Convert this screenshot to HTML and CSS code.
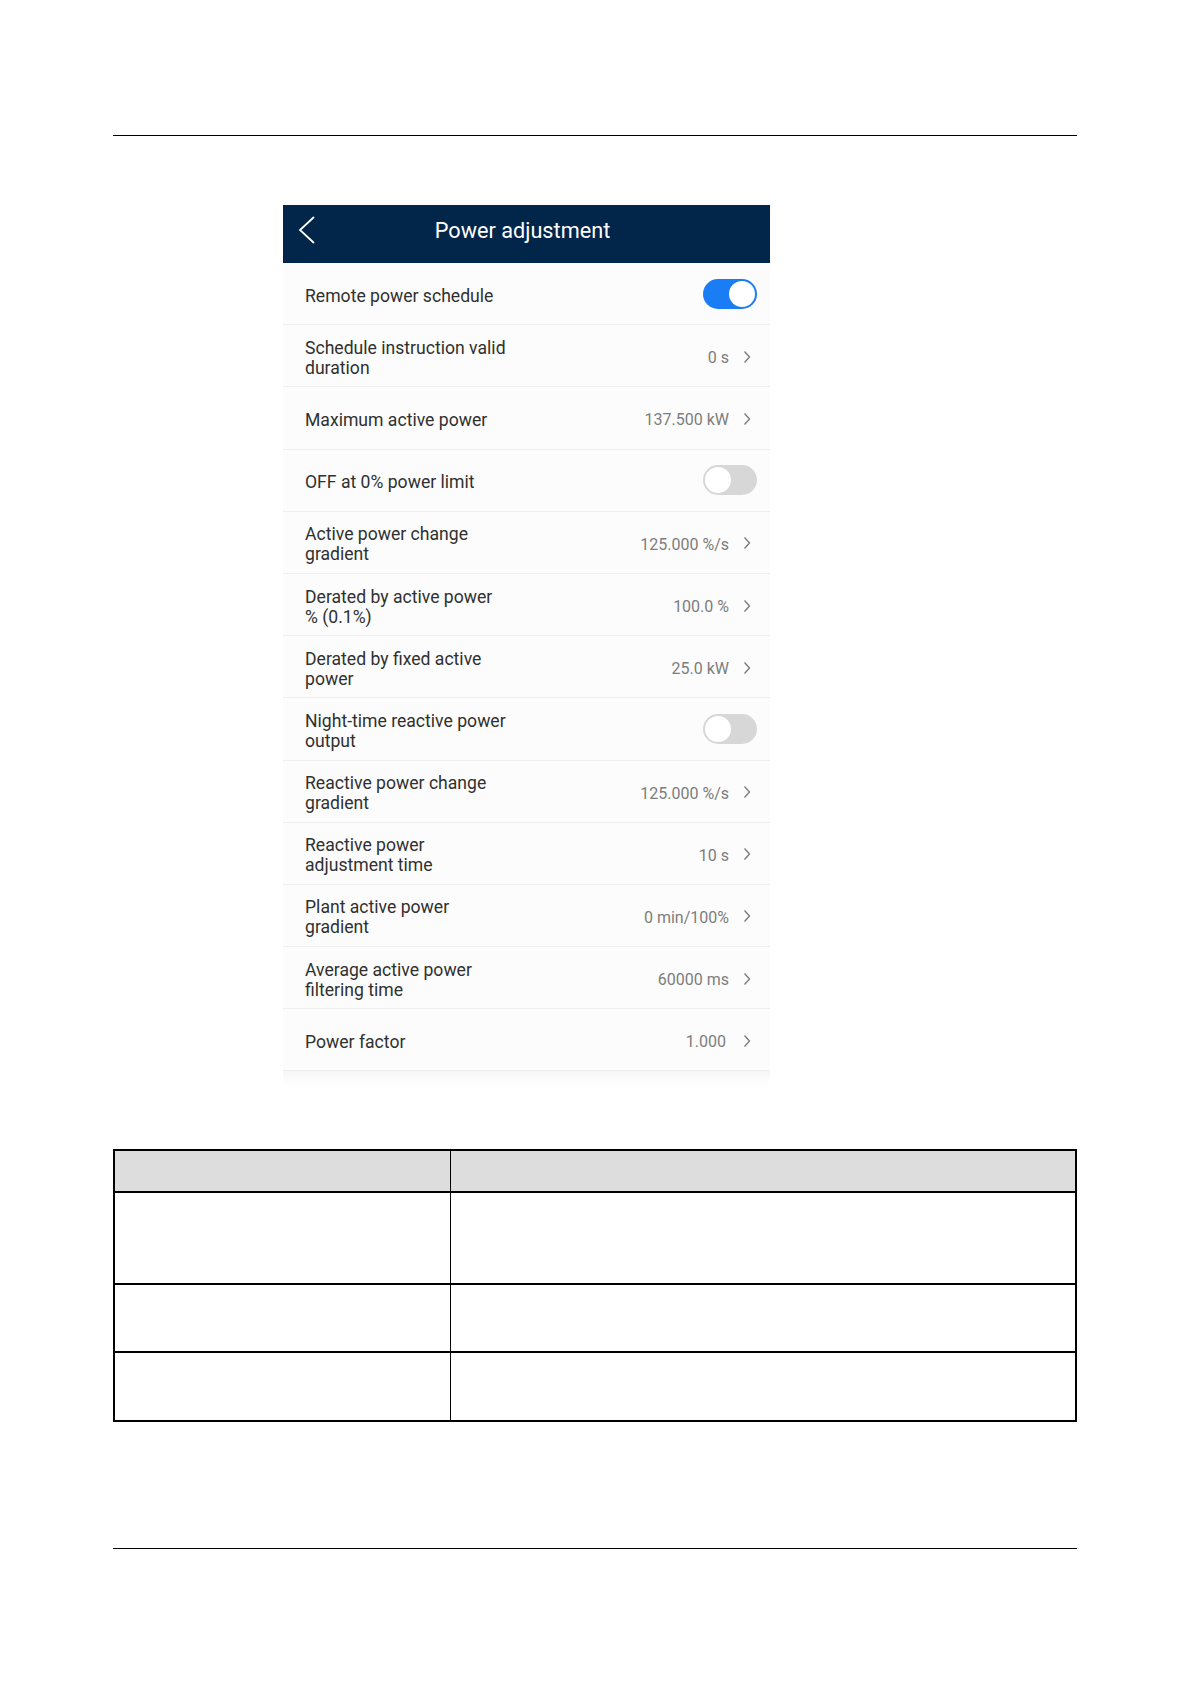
FILE: index.html
```html
<!DOCTYPE html>
<html>
<head>
    <title>Power adjustment</title>
    <link rel="stylesheet" href="styles.css">
</head>
<body>
    <div class="page">
        <div class="rule"></div>

        <div class="phone">
            <div class="appbar">
                <svg class="back" width="18" height="30" viewBox="0 0 18 30">
                    <polyline points="16,2 2,15 16,28" fill="none" stroke="#ffffff" stroke-width="1.8"/>
                </svg>
                <span class="title">Power adjustment</span>
            </div>

            <div class="list">
                <div class="row">
                    <div class="label">Remote power schedule</div>
                    <div class="switch on"><span class="knob"></span></div>
                </div>
                <div class="row">
                    <div class="label">Schedule instruction valid<br>duration</div>
                    <div class="value">0 s</div>
                    <svg class="chev" width="8" height="14" viewBox="0 0 8 14"><polyline points="1.5,1.5 6.5,7 1.5,12.5"/></svg>
                </div>
                <div class="row">
                    <div class="label">Maximum active power</div>
                    <div class="value">137.500 kW</div>
                    <svg class="chev" width="8" height="14" viewBox="0 0 8 14"><polyline points="1.5,1.5 6.5,7 1.5,12.5"/></svg>
                </div>
                <div class="row">
                    <div class="label">OFF at 0% power limit</div>
                    <div class="switch"><span class="knob"></span></div>
                </div>
                <div class="row">
                    <div class="label">Active power change<br>gradient</div>
                    <div class="value">125.000 %/s</div>
                    <svg class="chev" width="8" height="14" viewBox="0 0 8 14"><polyline points="1.5,1.5 6.5,7 1.5,12.5"/></svg>
                </div>
                <div class="row">
                    <div class="label">Derated by active power<br>% (0.1%)</div>
                    <div class="value">100.0 %</div>
                    <svg class="chev" width="8" height="14" viewBox="0 0 8 14"><polyline points="1.5,1.5 6.5,7 1.5,12.5"/></svg>
                </div>
                <div class="row">
                    <div class="label">Derated by fixed active<br>power</div>
                    <div class="value">25.0 kW</div>
                    <svg class="chev" width="8" height="14" viewBox="0 0 8 14"><polyline points="1.5,1.5 6.5,7 1.5,12.5"/></svg>
                </div>
                <div class="row">
                    <div class="label">Night-time reactive power<br>output</div>
                    <div class="switch"><span class="knob"></span></div>
                </div>
                <div class="row">
                    <div class="label">Reactive power change<br>gradient</div>
                    <div class="value">125.000 %/s</div>
                    <svg class="chev" width="8" height="14" viewBox="0 0 8 14"><polyline points="1.5,1.5 6.5,7 1.5,12.5"/></svg>
                </div>
                <div class="row">
                    <div class="label">Reactive power<br>adjustment time</div>
                    <div class="value">10 s</div>
                    <svg class="chev" width="8" height="14" viewBox="0 0 8 14"><polyline points="1.5,1.5 6.5,7 1.5,12.5"/></svg>
                </div>
                <div class="row">
                    <div class="label">Plant active power<br>gradient</div>
                    <div class="value">0 min/100%</div>
                    <svg class="chev" width="8" height="14" viewBox="0 0 8 14"><polyline points="1.5,1.5 6.5,7 1.5,12.5"/></svg>
                </div>
                <div class="row">
                    <div class="label">Average active power<br>filtering time</div>
                    <div class="value">60000 ms</div>
                    <svg class="chev" width="8" height="14" viewBox="0 0 8 14"><polyline points="1.5,1.5 6.5,7 1.5,12.5"/></svg>
                </div>
                <div class="row">
                    <div class="label">Power factor</div>
                    <div class="value short">1.000</div>
                    <svg class="chev" width="8" height="14" viewBox="0 0 8 14"><polyline points="1.5,1.5 6.5,7 1.5,12.5"/></svg>
                </div>
            </div>
            <div class="fade"></div>
        </div>

        <table class="params">
            <tr class="head"><th class="c1"></th><th></th></tr>
            <tr class="r1"><td class="c1"></td><td></td></tr>
            <tr class="r2"><td class="c1"></td><td></td></tr>
            <tr class="r3"><td class="c1"></td><td></td></tr>
        </table>

        <div class="rule bottom"></div>
    </div>
</body>
</html>
```

FILE: styles.css
```css
body {
    margin: 0;
    background: #ffffff;
    font-family: Roboto, "Liberation Sans", sans-serif;
}
.page {
    width: 964px;
    padding: 135px 0 0 113px;
}
.rule {
    border-top: 1px solid #000;
    height: 0;
}
.rule.bottom {
    margin-top: 126px;
}

/* phone screenshot */
.phone {
    width: 487px;
    margin: 69px 0 0 170px;
    background: #fbfcfb;
}
.appbar {
    height: 58px;
    background: #02264a;
    display: flex;
    align-items: center;
    justify-content: center;
    position: relative;
}
.back {
    position: absolute;
    left: 15px;
    top: 10px;
}
.title {
    color: #ffffff;
    font-size: 21.7px;
    margin: 0 0 8px -8px;
}
.row {
    height: 62.2px;
    box-sizing: border-box;
    border-bottom: 1px solid #eef0ee;
    display: flex;
    align-items: center;
    padding: 0 13px 0 22px;
}
.label {
    flex: 1;
    color: #303030;
    font-size: 17.6px;
    line-height: 20px;
    padding-top: 4px;
}
.value {
    color: #7d7d7d;
    font-size: 16px;
    margin-right: 14px;
    padding-top: 4px;
}
.value.short {
    margin-right: 17px;
}
.chev {
    margin-right: 6px;
    margin-top: 2px;
}
.chev polyline {
    fill: none;
    stroke: #777777;
    stroke-width: 1.3;
}
.switch {
    width: 54px;
    height: 30px;
    border-radius: 15px;
    background: #d6d7d6;
    box-sizing: border-box;
    position: relative;
}
.switch .knob {
    position: absolute;
    left: 2px;
    top: 2px;
    width: 26px;
    height: 26px;
    border-radius: 50%;
    background: #ffffff;
}
.switch.on {
    background: #1a7df5;
}
.switch.on .knob {
    left: 26px;
}
.fade {
    height: 15px;
    background: linear-gradient(#f5f7f5, #ffffff);
}

/* table */
.params {
    margin-top: 63px;
    width: 964px;
    border-collapse: collapse;
    border: 2px solid #000;
}
.params th, .params td {
    border-top: 2px solid #000;
    border-left: 1px solid #000;
    padding: 0;
}
.params .c1 {
    width: 335px;
}
.params .head {
    height: 42px;
    background: #dddddd;
}
.params .r1 { height: 92px; }
.params .r2 { height: 68px; }
.params .r3 { height: 69px; }
```
